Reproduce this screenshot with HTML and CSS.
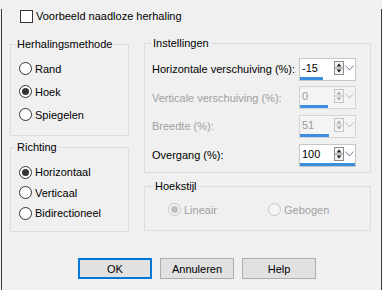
FILE: index.html
```html
<!DOCTYPE html>
<html>
<head>
<meta charset="utf-8">
<link rel="stylesheet" href="styles.css">
</head>
<body>
<div class="window">
    <div class="check-row"><span class="checkbox"></span>Voorbeeld naadloze herhaling</div>

    <div class="main">
        <div class="col">
            <fieldset class="group group-method">
                <legend>Herhalingsmethode</legend>
                <div class="radio-list method-list">
                    <div class="radio-row"><span class="radio"></span>Rand</div>
                    <div class="radio-row"><span class="radio checked"></span>Hoek</div>
                    <div class="radio-row"><span class="radio"></span>Spiegelen</div>
                </div>
            </fieldset>
            <fieldset class="group group-direction">
                <legend>Richting</legend>
                <div class="radio-list direction-list">
                    <div class="radio-row"><span class="radio checked"></span>Horizontaal</div>
                    <div class="radio-row"><span class="radio"></span>Verticaal</div>
                    <div class="radio-row"><span class="radio"></span>Bidirectioneel</div>
                </div>
            </fieldset>
        </div>

        <div class="col">
            <fieldset class="group group-settings">
                <legend>Instellingen</legend>
                <div class="field-list">
                    <div class="field-row">
                        <span class="field-label">Horizontale verschuiving (%):</span>
                        <div class="spin">
                            <div class="spin-main">
                                <span class="spin-value">-15</span>
                                <svg class="spin-arrows" width="10" height="14" viewBox="0 0 10 14"><rect x="0.5" y="0.5" width="9" height="13" fill="#f4f4f4" stroke="#8c8c8c"/><line x1="1" y1="7" x2="9" y2="7" stroke="#8c8c8c"/><path d="M5 2.5 L7.5 5.5 L2.5 5.5 Z" fill="#222"/><path d="M2.5 8.5 L7.5 8.5 L5 11.5 Z" fill="#222"/></svg>
                                <svg class="spin-drop" width="9" height="6" viewBox="0 0 9 6"><path d="M0.5 0.5 L4.5 5 L8.5 0.5" fill="none" stroke="#6f7f96" stroke-width="1"/></svg>
                            </div>
                            <div class="spin-track"><span class="spin-bar" style="width:23px"></span></div>
                        </div>
                    </div>
                    <div class="field-row disabled">
                        <span class="field-label">Verticale verschuiving (%):</span>
                        <div class="spin">
                            <div class="spin-main">
                                <span class="spin-value">0</span>
                                <svg class="spin-arrows" width="10" height="14" viewBox="0 0 10 14"><rect x="0.5" y="0.5" width="9" height="13" fill="#f4f4f4" stroke="#c4c4c4"/><line x1="1" y1="7" x2="9" y2="7" stroke="#c4c4c4"/><path d="M5 2.5 L7.5 5.5 L2.5 5.5 Z" fill="#a8a8a8"/><path d="M2.5 8.5 L7.5 8.5 L5 11.5 Z" fill="#a8a8a8"/></svg>
                                <svg class="spin-drop" width="9" height="6" viewBox="0 0 9 6"><path d="M0.5 0.5 L4.5 5 L8.5 0.5" fill="none" stroke="#bcbcbc" stroke-width="1"/></svg>
                            </div>
                            <div class="spin-track"><span class="spin-bar" style="width:28px"></span></div>
                        </div>
                    </div>
                    <div class="field-row disabled">
                        <span class="field-label">Breedte (%):</span>
                        <div class="spin">
                            <div class="spin-main">
                                <span class="spin-value">51</span>
                                <svg class="spin-arrows" width="10" height="14" viewBox="0 0 10 14"><rect x="0.5" y="0.5" width="9" height="13" fill="#f4f4f4" stroke="#c4c4c4"/><line x1="1" y1="7" x2="9" y2="7" stroke="#c4c4c4"/><path d="M5 2.5 L7.5 5.5 L2.5 5.5 Z" fill="#a8a8a8"/><path d="M2.5 8.5 L7.5 8.5 L5 11.5 Z" fill="#a8a8a8"/></svg>
                                <svg class="spin-drop" width="9" height="6" viewBox="0 0 9 6"><path d="M0.5 0.5 L4.5 5 L8.5 0.5" fill="none" stroke="#bcbcbc" stroke-width="1"/></svg>
                            </div>
                            <div class="spin-track"><span class="spin-bar" style="width:29px"></span></div>
                        </div>
                    </div>
                    <div class="field-row">
                        <span class="field-label">Overgang (%):</span>
                        <div class="spin">
                            <div class="spin-main">
                                <span class="spin-value">100</span>
                                <svg class="spin-arrows" width="10" height="14" viewBox="0 0 10 14"><rect x="0.5" y="0.5" width="9" height="13" fill="#f4f4f4" stroke="#8c8c8c"/><line x1="1" y1="7" x2="9" y2="7" stroke="#8c8c8c"/><path d="M5 2.5 L7.5 5.5 L2.5 5.5 Z" fill="#222"/><path d="M2.5 8.5 L7.5 8.5 L5 11.5 Z" fill="#222"/></svg>
                                <svg class="spin-drop" width="9" height="6" viewBox="0 0 9 6"><path d="M0.5 0.5 L4.5 5 L8.5 0.5" fill="none" stroke="#6f7f96" stroke-width="1"/></svg>
                            </div>
                            <div class="spin-track"><span class="spin-bar" style="width:55px"></span></div>
                        </div>
                    </div>
                </div>
            </fieldset>

            <fieldset class="group group-corner">
                <legend>Hoekstijl</legend>
                <div class="corner-row">
                    <div class="radio-row disabled corner-first"><span class="radio checked"></span>Lineair</div>
                    <div class="radio-row disabled"><span class="radio"></span>Gebogen</div>
                </div>
            </fieldset>
        </div>
    </div>

    <div class="buttons">
        <button class="btn btn-default">OK</button>
        <button class="btn">Annuleren</button>
        <button class="btn">Help</button>
    </div>
</div>
</body>
</html>
```

FILE: styles.css
```css
html, body {
    margin: 0;
    padding: 0;
}

body {
    width: 382px;
    height: 290px;
    background-color: #f0f0f0;
    font-family: "Liberation Sans", Arial, sans-serif;
    font-size: 11px;
    color: #000;
    overflow: hidden;
}

.window {
    box-sizing: border-box;
    width: 381px;
    height: 290px;
    margin-left: 1px;
    border: 1px solid #3c3c3c;
    border-top: none;
    background-color: #f0f0f0;
}

/* top checkbox */
.check-row {
    display: flex;
    align-items: center;
    height: 14px;
    margin-top: 9px;
    padding-left: 18px;
}

.checkbox {
    box-sizing: border-box;
    width: 13px;
    height: 13px;
    border: 1px solid #333;
    background-color: #fff;
    margin-right: 3px;
}

/* columns */
.main {
    display: grid;
    grid-template-columns: 119px 227px;
    column-gap: 15px;
    margin-top: 14px;
    padding-left: 8px;
}

.col {
    display: flex;
    flex-direction: column;
}

.group {
    box-sizing: border-box;
    margin: 0;
    padding: 0;
    border: 1px solid #dcdcdc;
    min-width: 0;
}

.group legend {
    padding: 0 2px;
    margin-left: 4px;
    line-height: 13px;
}

.group-method {
    height: 98px;
    margin-top: 1px;
}

.group-direction {
    height: 91px;
    margin-top: 5px;
}

.group-settings {
    height: 136px;
}

.group-settings legend {
    margin-left: 6px;
}

.group-corner {
    height: 51px;
    margin-top: 7px;
}

.group-corner legend {
    margin-left: 8px;
}

/* radios */
.radio-list {
    display: flex;
    flex-direction: column;
    padding-left: 8px;
}

.method-list {
    padding-top: 6px;
}

.method-list .radio-row {
    height: 23px;
}

.direction-list {
    padding-top: 8px;
}

.direction-list .radio-row {
    height: 20.5px;
}

.radio-row {
    display: flex;
    align-items: center;
}

.radio {
    box-sizing: border-box;
    width: 13px;
    height: 13px;
    border: 1px solid #333;
    border-radius: 50%;
    background-color: #fff;
    margin-right: 3px;
    display: flex;
    align-items: center;
    justify-content: center;
}

.radio.checked::after {
    content: "";
    width: 7px;
    height: 7px;
    border-radius: 50%;
    background-color: #333;
}

.radio-row.disabled {
    color: #a0a0a0;
}

.radio-row.disabled .radio {
    border-color: #c6c6c6;
    background-color: #f4f4f4;
}

.radio-row.disabled .radio.checked::after {
    background-color: #c0c0c0;
}

/* settings */
.field-list {
    padding: 5px 14px 0 7px;
}

.field-row {
    display: flex;
    align-items: center;
    justify-content: space-between;
    height: 28.6px;
}

.field-row.disabled .field-label {
    color: #a0a0a0;
}

.spin {
    box-sizing: border-box;
    width: 57px;
    height: 23px;
    border: 1px solid #c6c6c6;
    background-color: #fff;
    display: flex;
    flex-direction: column;
}

.spin-main {
    flex: 1;
    display: flex;
    align-items: center;
    padding-left: 2px;
}

.spin-value {
    flex: 1;
}

.spin-arrows {
    display: block;
    margin-right: 1px;
}

.spin-drop {
    display: block;
    margin-right: 1px;
}

.spin-track {
    height: 3px;
}

.spin-bar {
    display: block;
    height: 3px;
    background-color: #3a8ee0;
}

.field-row.disabled .spin {
    background-color: #f4f4f4;
    border-color: #d4d4d4;
}

.field-row.disabled .spin-value {
    color: #9a9a9a;
}

/* corner style */
.corner-row {
    display: flex;
    padding-top: 10px;
    padding-left: 23px;
}

.corner-first {
    width: 100px;
}

/* buttons */
.buttons {
    display: flex;
    gap: 8px;
    margin-top: 26px;
    padding-left: 76px;
}

.btn {
    box-sizing: border-box;
    width: 74px;
    height: 21px;
    padding: 0;
    background-color: #e1e1e1;
    border: 1px solid #adadad;
    font-family: "Liberation Sans", Arial, sans-serif;
    font-size: 11px;
    color: #000;
}

.btn-default {
    border: 2px solid #0078d7;
}
```
